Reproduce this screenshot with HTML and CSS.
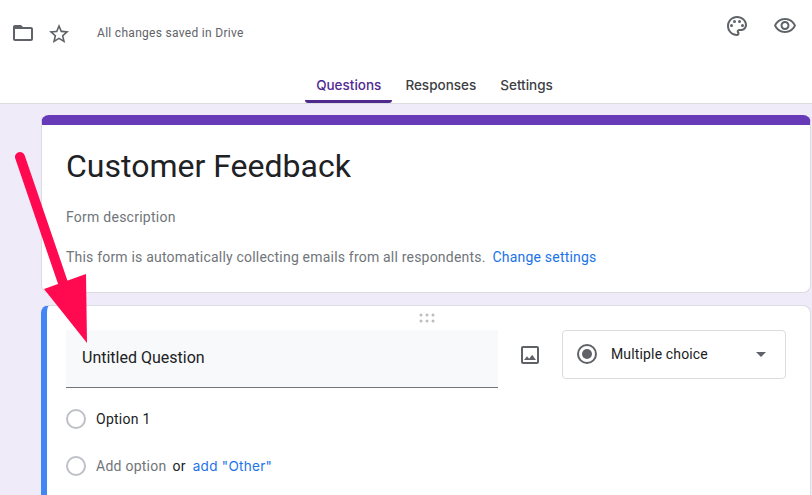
FILE: index.html
```html
<!DOCTYPE html>
<html lang="en">
<head>
<meta charset="utf-8">
<title>Customer Feedback</title>
<link rel="stylesheet" href="styles.css">
</head>
<body>
<header class="header">
  <div class="topbar">
    <div class="top-left">
      <svg class="icon folder" viewBox="0 0 24 24"><path d="M20 6h-8l-2-2H4c-1.1 0-2 .9-2 2v12c0 1.1.9 2 2 2h16c1.1 0 2-.9 2-2V8c0-1.1-.9-2-2-2zm0 12H4V8h16v10z"/></svg>
      <svg class="icon star" viewBox="0 0 24 24"><path d="M22 9.24l-7.19-.62L12 2 9.19 8.63 2 9.24l5.46 4.73L5.82 21 12 17.27 18.18 21l-1.63-7.03L22 9.24zM12 15.4l-3.76 2.27 1-4.28-3.32-2.88 4.38-.38L12 6.1l1.71 4.04 4.38.38-3.32 2.88 1 4.28L12 15.4z"/></svg>
      <span class="saved">All changes saved in Drive</span>
    </div>
    <div class="top-right">
      <svg class="icon palette" viewBox="0 0 24 24"><path d="M12 2C6.49 2 2 6.49 2 12s4.49 10 10 10c1.38 0 2.5-1.12 2.5-2.5 0-.61-.23-1.2-.64-1.67-.08-.1-.13-.21-.13-.33 0-.28.22-.5.5-.5H16c3.31 0 6-2.69 6-6 0-4.96-4.49-9-10-9zm4 13h-1.77c-1.38 0-2.5 1.12-2.5 2.5 0 .61.22 1.19.63 1.65.06.07.14.19.14.35 0 .28-.22.5-.5.5-4.41 0-8-3.59-8-8s3.59-8 8-8 8 3.14 8 7c0 2.21-1.79 4-4 4z"/><circle cx="6.5" cy="11.5" r="1.5"/><circle cx="9.5" cy="7.5" r="1.5"/><circle cx="14.5" cy="7.5" r="1.5"/><circle cx="17.5" cy="11.5" r="1.5"/></svg>
      <svg class="icon eye" viewBox="0 0 24 24"><path d="M12 6c3.79 0 7.17 2.13 8.82 5.5C19.17 14.87 15.79 17 12 17s-7.17-2.13-8.82-5.5C4.83 8.13 8.21 6 12 6m0-2C7 4 2.73 7.11 1 11.5 2.73 15.89 7 19 12 19s9.27-3.11 11-7.5C21.27 7.11 17 4 12 4zm0 5c1.38 0 2.5 1.12 2.5 2.5S13.38 14 12 14s-2.5-1.12-2.5-2.5S10.62 9 12 9m0-2c-2.48 0-4.5 2.02-4.5 4.5S9.52 16 12 16s4.5-2.02 4.5-4.5S14.48 7 12 7z"/></svg>
    </div>
  </div>
  <nav class="tabs">
    <a class="tab tab-active">Questions</a>
    <a class="tab">Responses</a>
    <a class="tab">Settings</a>
  </nav>
</header>
<main class="content">
  <section class="card title-card">
    <h1 class="form-title">Customer Feedback</h1>
    <p class="form-desc">Form description</p>
    <p class="form-note">This form is automatically collecting emails from all respondents.<a class="link note-link">Change settings</a></p>
  </section>
  <section class="card question-card">
    <div class="drag"><svg viewBox="0 0 16 10" class="drag-icon"><g><circle cx="2" cy="2" r="1.5"/><circle cx="8" cy="2" r="1.5"/><circle cx="14" cy="2" r="1.5"/><circle cx="2" cy="8" r="1.5"/><circle cx="8" cy="8" r="1.5"/><circle cx="14" cy="8" r="1.5"/></g></svg></div>
    <div class="q-row">
      <div class="q-input">Untitled Question</div>
      <svg class="icon image-icon" viewBox="0 0 24 24"><path d="M19 5v14H5V5h14m0-2H5c-1.1 0-2 .9-2 2v14c0 1.1.9 2 2 2h14c1.1 0 2-.9 2-2V5c0-1.1-.9-2-2-2zm-4.86 8.86l-3 3.87L9 13.14 6 17h12l-3.86-5.14z"/></svg>
      <div class="q-type">
        <span class="radio-on"><span class="radio-dot"></span></span>
        <span class="q-type-label">Multiple choice</span>
        <span class="caret"></span>
      </div>
    </div>
    <div class="option option-first"><span class="radio"></span><span class="option-text">Option 1</span></div>
    <div class="option"><span class="radio"></span><span class="add-option">Add option</span><span class="or">or</span><a class="link add-other">add "Other"</a></div>
  </section>
</main>
<svg class="arrow" viewBox="0 0 100 210" width="100" height="210">
  <line x1="20" y1="12" x2="63" y2="138" class="arrow-shaft"/>
  <polygon points="44,144 86,129 87,198" class="arrow-head"/>
</svg>
</body>
</html>
```
FILE: styles.css
```css
* { box-sizing: border-box; }
html, body { margin: 0; height: 100%; overflow: hidden; }
body { background: #f0ebf8; font-family: Roboto, sans-serif; color: #202124; position: relative; }
.header { height: 104px; background: #fff; border-bottom: 1px solid #dadce0; display: flex; flex-direction: column; }
.topbar { display: flex; justify-content: space-between; padding: 20px 15px 0 11px; height: 71px; }
.top-left { display: flex; align-items: center; height: 24px; margin-top: 1px; }
.top-right { display: flex; gap: 24px; height: 24px; margin-top: -6px; }
.icon { width: 24px; height: 24px; fill: #5f6368; flex: none; display: block; }
.star { margin-left: 12px; margin-top: 1px; }
.saved { margin-left: 26px; font-size: 12px; color: #5f6368; letter-spacing: .3px; }
.tabs { display: flex; justify-content: center; gap: 2px; margin-left: 57px; height: 32px; }
.tab { padding: 0 11px; font-family: Inter, Roboto, sans-serif; font-size: 13.5px; font-weight: 500; color: #3c4043; line-height: 28px; height: 32px; }
.tab-active { color: #4f2a92; border-bottom: 3px solid #4e2a8e; border-radius: 0 0 3px 3px; }
.content { padding: 11px 1px 0 41px; display: flex; flex-direction: column; gap: 12px; }
.card { background: #fff; border: 1px solid #dadce0; border-radius: 8px; }
.title-card { height: 178px; border-top: 10px solid #673ab7; padding: 0 0 0 24px; }
.form-title { margin: 21px 0 0; font-size: 32px; font-weight: 400; line-height: 40px; }
.form-desc { margin: 21px 0 0; font-size: 14px; line-height: 20px; color: #70757a; letter-spacing: .25px; }
.form-note { margin: 20px 0 0; font-size: 14px; line-height: 20px; color: #70757a; letter-spacing: .2px; }
.link { color: #1a73e8; }
.note-link { margin-left: 7px; }
.question-card { height: 260px; border-left: 6px solid #4285f4; padding: 0 22px 0 19px; }
.drag { height: 24px; display: flex; justify-content: center; align-items: center; }
.drag-icon { width: 16px; height: 10px; fill: #bdbdbd; display: block; }
.q-row { display: flex; align-items: flex-start; }
.q-input { width: 432px; height: 58px; flex: none; background: #f8f9fa; border-bottom: 1px solid #70757a; padding: 18px 16px 0; font-size: 16px; line-height: 20px; }
.image-icon { margin: 13px 0 0 20px; }
.q-type { margin-left: 20px; width: 224px; height: 49px; flex: none; border: 1px solid #dadce0; border-radius: 4px; display: flex; align-items: center; padding: 0 19px 2px 14px; }
.radio-on { width: 20px; height: 20px; border: 2px solid #5f6368; border-radius: 50%; display: flex; align-items: center; justify-content: center; flex: none; }
.radio-dot { width: 10px; height: 10px; border-radius: 50%; background: #5f6368; }
.q-type-label { margin-left: 14px; font-size: 14px; flex: 1; color: #202124; letter-spacing: .15px; }
.caret { width: 0; height: 0; margin-top: 2px; border-left: 5px solid transparent; border-right: 5px solid transparent; border-top: 5px solid #5f6368; }
.option { display: flex; align-items: center; height: 47px; font-size: 14px; letter-spacing: .25px; }
.option-first { margin-top: 7px; }
.radio { width: 20px; height: 20px; border: 2px solid #bdc1c6; border-radius: 50%; flex: none; }
.option-text { margin-left: 10px; }
.add-option { margin-left: 10px; color: #70757a; }
.or { margin-left: 6px; }
.add-other { margin-left: 7px; font-family: Inter, Roboto, sans-serif; font-size: 13.5px; font-weight: 400; letter-spacing: .3px; }
.arrow { position: absolute; left: 0; top: 145px; }
.arrow-shaft { stroke: #ff0a50; stroke-width: 10; stroke-linecap: round; }
.arrow-head { fill: #ff0a50; }
```
